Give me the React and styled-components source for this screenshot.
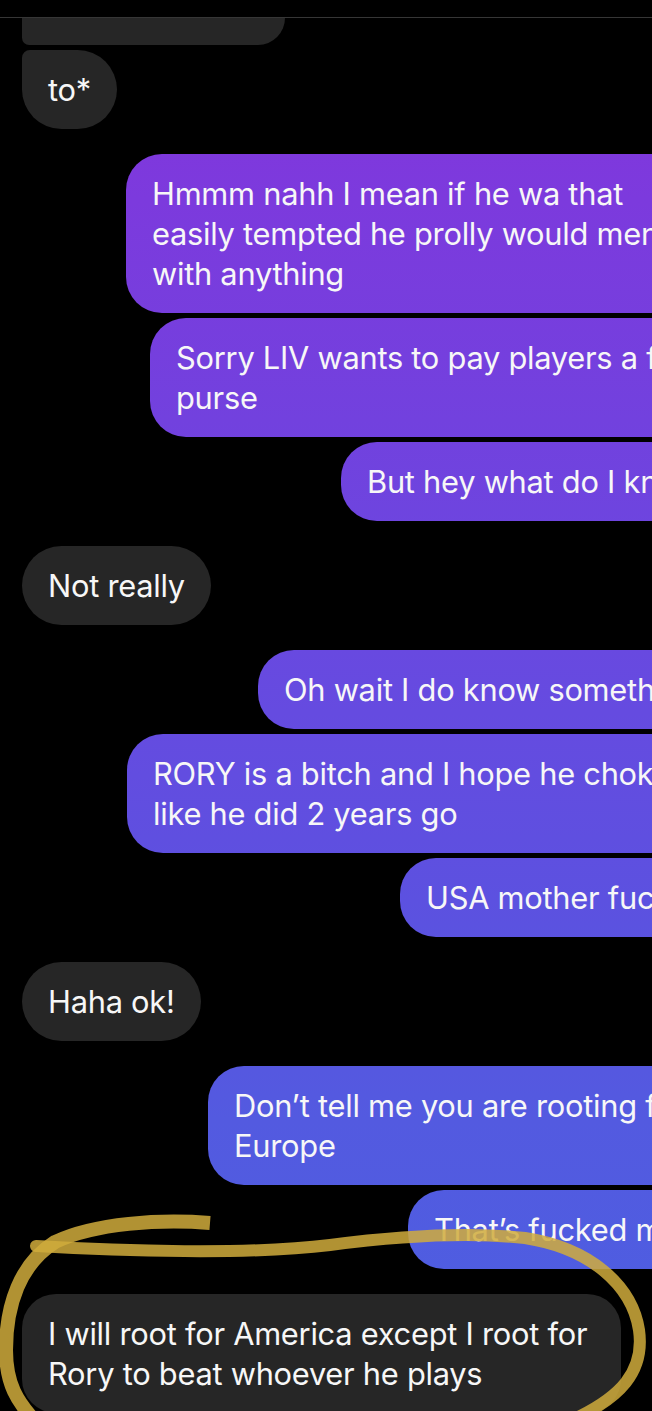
import React from "react";
import styled, { createGlobalStyle, css } from "styled-components";

const Global = createGlobalStyle`
  html, body { margin: 0; padding: 0; background: #000; overflow: hidden; }
  #root { width: 652px; height: 1411px; overflow: hidden; position: relative; }
`;

const Screen = styled.div`
  position: relative;
  width: 652px;
  height: 1411px;
  overflow: hidden;
  background: #000;
`;

const Header = styled.div`
  height: 17px;
  border-bottom: 1px solid #363636;
  background: #000;
`;

const Thread = styled.div`
  width: 760px;
  display: flex;
  flex-direction: column;
  gap: 25px;
`;

const Group = styled.div`
  display: flex;
  flex-direction: column;
  gap: 5px;
`;

const Bubble = styled.div`
  font-family: Inter, "Liberation Sans", sans-serif;
  font-size: 30.8px;
  line-height: 40px;
  letter-spacing: -0.25px;
  color: #f7f7f7;
  padding: 19.5px 26px;
  white-space: nowrap;
  border-radius: 40px;
`;

const InBubble = styled(Bubble)`
  align-self: flex-start;
  margin-left: 22px;
  background: #262626;
  ${(p) => p.$tail === "top" && css`border-top-left-radius: 8px;`}
  ${(p) => p.$wide && css`border-radius: 34px; padding-right: 34px;`}
`;

const PartialBubble = styled.div`
  margin-left: 22px;
  width: 263px;
  height: 27px;
  background: #262626;
  border-radius: 0 0 30px 8px;
  margin-bottom: -20px;
`;

const OutBubble = styled(Bubble)`
  align-self: stretch;
  margin-left: ${(p) => p.$left}px;
  border-radius: 36px 0 0 36px;
  background: linear-gradient(
    to bottom,
    #8534dc 0px,
    #7c3add 200px,
    #7241de 420px,
    #6849e0 650px,
    #5c51e0 900px,
    #535ae0 1120px,
    #4b5fe1 1411px
  );
  background-attachment: fixed;
`;

const Line = styled.div``;

const Scribble = styled.svg`
  position: absolute;
  left: 0;
  top: 0;
  width: 652px;
  height: 1411px;
  pointer-events: none;
`;

export default function App() {
  return (
    <Screen>
      <Global />
      <Header />
      <Thread>
        <Group>
          <PartialBubble />
        </Group>
        <Group>
          <InBubble $tail="top">to*</InBubble>
        </Group>
        <Group>
          <OutBubble $left={126}>
            <Line>Hmmm nahh I mean if he wa that</Line>
            <Line>easily tempted he prolly would mention</Line>
            <Line>with anything</Line>
          </OutBubble>
          <OutBubble $left={150}>
            <Line>Sorry LIV wants to pay players a fat</Line>
            <Line>purse</Line>
          </OutBubble>
          <OutBubble $left={341}>But hey what do I know</OutBubble>
        </Group>
        <Group>
          <InBubble>Not really</InBubble>
        </Group>
        <Group>
          <OutBubble $left={258}>Oh wait I do know something</OutBubble>
          <OutBubble $left={127}>
            <Line>RORY is a bitch and I hope he chokes</Line>
            <Line>like he did 2 years go</Line>
          </OutBubble>
          <OutBubble $left={400}>USA mother fuckers</OutBubble>
        </Group>
        <Group>
          <InBubble>Haha ok!</InBubble>
        </Group>
        <Group>
          <OutBubble $left={208}>
            <Line>Don’t tell me you are rooting for</Line>
            <Line>Europe</Line>
          </OutBubble>
          <OutBubble $left={408}>That’s fucked man</OutBubble>
        </Group>
        <Group>
          <InBubble $wide>
            <Line>I will root for America except I root for</Line>
            <Line>Rory to beat whoever he plays</Line>
          </InBubble>
        </Group>
      </Thread>
      <Scribble viewBox="0 0 652 1411">
        <g fill="none" stroke="rgb(208,172,60)" strokeOpacity="0.85">
          <path
            d="M 210 1223 C 160 1219, 95 1223, 55 1242 C 20 1264, 6 1305, 6 1350 C 6 1385, 18 1402, 34 1420"
            strokeLinecap="butt"
            strokeWidth="14"
          />
          <path
            d="M 36 1246 C 120 1251, 250 1255, 330 1245 C 400 1236, 470 1232, 525 1238 C 590 1248, 632 1285, 639 1330 C 645 1372, 620 1398, 572 1420"
            strokeLinecap="round"
            strokeWidth="12"
          />
        </g>
      </Scribble>
    </Screen>
  );
}
